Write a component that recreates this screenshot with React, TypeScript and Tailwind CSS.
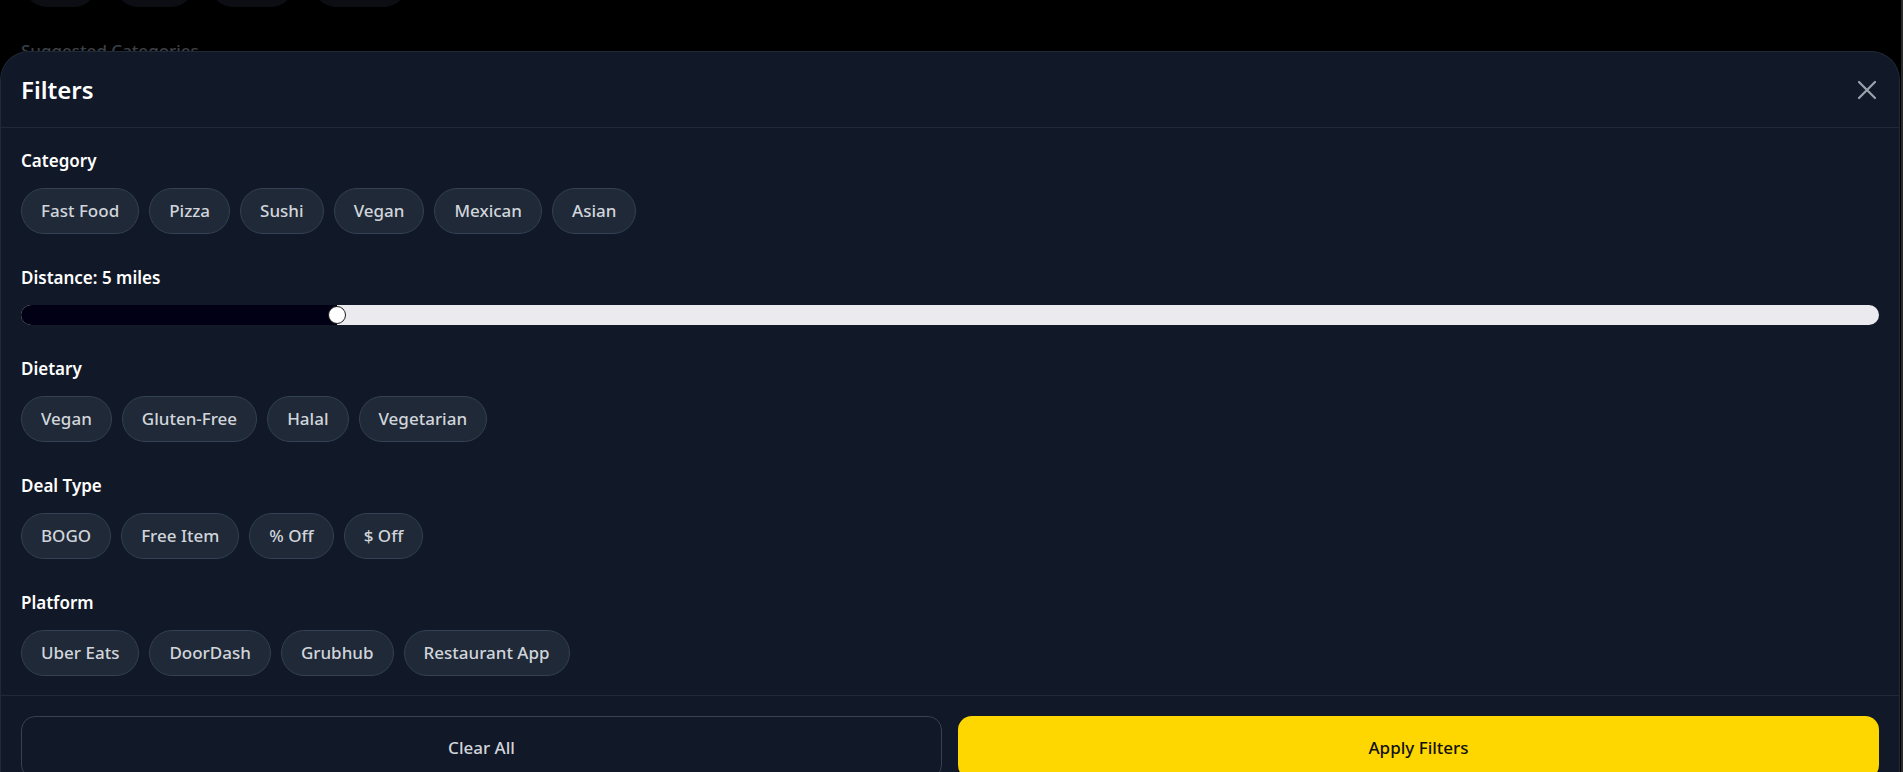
import { useState } from "react";

const categories = ["Fast Food", "Pizza", "Sushi", "Vegan", "Mexican", "Asian"];
const dietary = ["Vegan", "Gluten-Free", "Halal", "Vegetarian"];
const dealTypes = ["BOGO", "Free Item", "% Off", "$ Off"];
const platforms = ["Uber Eats", "DoorDash", "Grubhub", "Restaurant App"];

const MIN_MILES = 1;
const MAX_MILES = 25;

function Chip({ label }: { label: string }) {
  return (
    <button className="h-[46px] rounded-full border border-[#334155] bg-[#1f2937] px-[19px] text-[17px] font-medium leading-[24px] text-[#d1d5db]">
      {label}
    </button>
  );
}

function FilterSection({ title, children }: { title: string; children: React.ReactNode }) {
  return (
    <div className="flex flex-col gap-[15px]">
      <h3 className="pt-[1px] text-[17px] font-semibold leading-[24px] text-white">{title}</h3>
      {children}
    </div>
  );
}

function ChipRow({ items }: { items: string[] }) {
  return (
    <div className="flex flex-wrap gap-[10px]">
      {items.map((item) => (
        <Chip key={item} label={item} />
      ))}
    </div>
  );
}

function DistanceSlider({ value }: { value: number }) {
  const ratio = (value - MIN_MILES) / (MAX_MILES - MIN_MILES);
  // thumb centre follows the native range maths: half thumb + ratio of the rest
  const left = `calc(9px + ${ratio} * (100% - 18px))`;

  return (
    <div className="relative flex h-[20px] w-full rounded-full bg-[#ebebef]">
      <div className="h-full rounded-l-full bg-[#020014]" style={{ width: left }} />
      <div
        className="absolute top-[1px] h-[18px] w-[18px] -translate-x-1/2 rounded-full border border-[#1b1b1b] bg-white"
        style={{ left }}
      />
    </div>
  );
}

export default function App() {
  const [distance] = useState(5);

  return (
    <div className="flex h-[772px] w-full overflow-hidden bg-black [font-family:'Noto_Sans','Liberation_Sans',sans-serif]">
      <div className="flex min-w-0 flex-1 flex-col">
        <div className="h-[51px] shrink-0 overflow-hidden px-[21px]">
          <div className="-mt-[39px] flex h-[46px]">
            <div className="ml-[3px] h-full w-[73px] rounded-full bg-[#0c0e13]" />
            <div className="ml-[18px] h-full w-[79px] rounded-full bg-[#0c0e13]" />
            <div className="ml-[16px] h-full w-[84px] rounded-full bg-[#0c0e13]" />
            <div className="ml-[19px] h-full w-[94px] rounded-full bg-[#0c0e13]" />
          </div>
          <p className="mt-[32px] text-[17px] font-medium leading-[24px] text-[#3b4048]">Suggested Categories</p>
        </div>

        <div className="mr-[1px] flex flex-1 flex-col rounded-t-[29px] border-x border-t border-[#1f2937] bg-[#111827]">
          <div className="flex h-[76px] shrink-0 items-center justify-between border-b border-[#1f2937] pl-[20px] pr-[22px]">
            <h2 className="pt-[1px] text-[24px] font-semibold leading-[32px] text-white">Filters</h2>
            <button className="flex h-[20px] w-[20px] items-center justify-center text-[#9ca3af]">
              <svg viewBox="0 0 20 20" className="h-[20px] w-[20px]" fill="none" stroke="currentColor" strokeWidth="2.2" strokeLinecap="round">
                <path d="M2 2 18 18M18 2 2 18" />
              </svg>
            </button>
          </div>

          <div className="flex shrink-0 flex-col gap-[31px] px-[20px] pb-[19px] pt-[20px]">
            <FilterSection title="Category">
              <ChipRow items={categories} />
            </FilterSection>
            <FilterSection title={`Distance: ${distance} miles`}>
              <DistanceSlider value={distance} />
            </FilterSection>
            <FilterSection title="Dietary">
              <ChipRow items={dietary} />
            </FilterSection>
            <FilterSection title="Deal Type">
              <ChipRow items={dealTypes} />
            </FilterSection>
            <FilterSection title="Platform">
              <ChipRow items={platforms} />
            </FilterSection>
          </div>

          <div className="grid shrink-0 grid-cols-2 gap-[16px] border-t border-[#1f2937] px-[20px] pt-[20px]">
            <button className="flex h-[63px] items-center justify-center rounded-[14px] border border-[#374151] text-[17px] font-medium text-[#d1d5db]">
              Clear All
            </button>
            <button className="flex h-[63px] items-center justify-center rounded-[14px] bg-[#ffd700] text-[17px] font-medium text-[#111111]">
              Apply Filters
            </button>
          </div>
        </div>
      </div>
      <div className="w-[2px] shrink-0 bg-[#2a2a2c]" />
    </div>
  );
}
